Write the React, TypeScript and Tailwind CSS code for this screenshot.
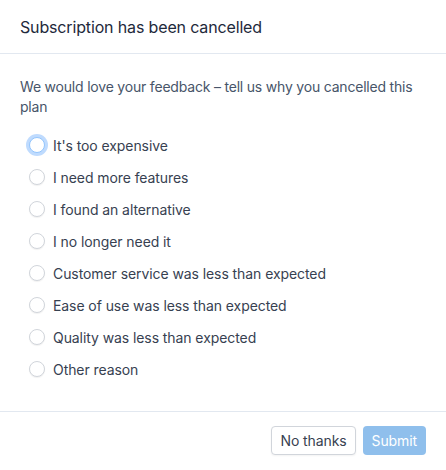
import { useState } from "react";

const REASONS = [
  "It's too expensive",
  "I need more features",
  "I found an alternative",
  "I no longer need it",
  "Customer service was less than expected",
  "Ease of use was less than expected",
  "Quality was less than expected",
  "Other reason",
];

export default function App() {
  const [selected, setSelected] = useState<string | null>(null);

  return (
    <div className="w-[446px] h-[470px] bg-white font-['Inter',sans-serif]">
      <div className="h-[54px] flex items-center px-5 border-b border-[#e2e8f0]">
        <h2 className="text-[16px] tracking-[-0.15px] text-[#1e293b]">Subscription has been cancelled</h2>
      </div>

      <div className="px-5 pt-[23px] pb-[26px] border-b border-[#e2e8f0]">
        <p className="text-[14px] leading-[20px] tracking-[-0.2px] text-[#475569]">
          We would love your feedback – tell us why you cancelled this plan
        </p>
        <div className="mt-[12px] pl-[9px] flex flex-col">
          {REASONS.map((r, i) => (
            <label key={r} className="h-8 flex items-center gap-2 cursor-pointer">
              <span
                className={
                  i === 0
                    ? "w-4 h-4 rounded-full bg-white border border-[#93c5fd] ring-[3px] ring-[#bfdbfe]"
                    : "w-4 h-4 rounded-full bg-white border border-[#d1d5db] shadow-[0_1px_1px_rgba(0,0,0,0.06)]"
                }
                onClick={() => setSelected(r)}
              />
              <span className="text-[14px] tracking-[-0.08px] text-[#374151]">{r}</span>
            </label>
          ))}
        </div>
      </div>

      <div className="flex justify-end gap-[7px] px-5 pt-[14px]">
        <button className="h-[29px] px-[8px] rounded-[4px] border border-[#d1d5db] bg-white text-[14px] tracking-[-0.1px] text-[#374151] shadow-[0_1px_2px_rgba(0,0,0,0.05)]">
          No thanks
        </button>
        <button
          disabled={!selected}
          className="h-[29px] px-[9px] rounded-[4px] bg-[#8fbfec] text-[14px] tracking-[-0.1px] text-white"
        >
          Submit
        </button>
      </div>
    </div>
  );
}
